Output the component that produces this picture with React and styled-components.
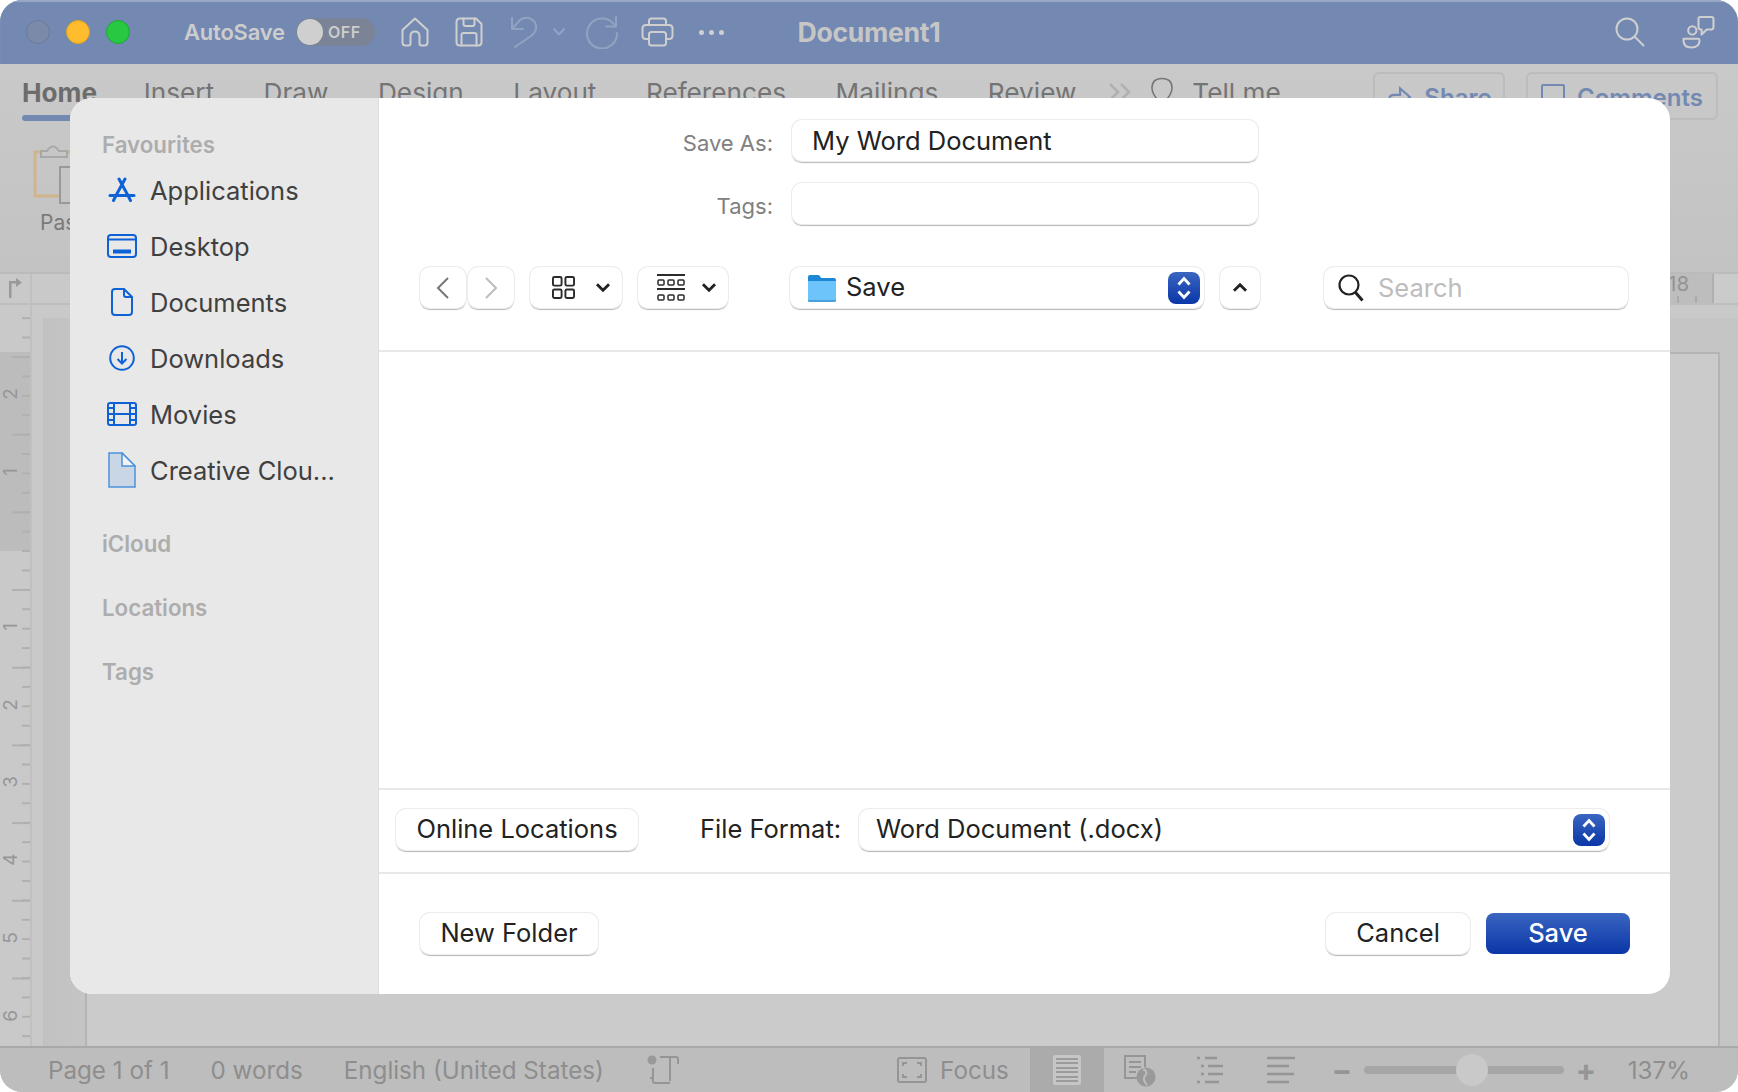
import styled, { createGlobalStyle } from 'styled-components';

const GlobalStyle = createGlobalStyle`
  html, body {
    margin: 0;
    padding: 0;
    background: #fff;
  }
  * {
    box-sizing: border-box;
  }
  body {
    font-family: Inter, "Liberation Sans", sans-serif;
  }
`;

const BLUE = '#0f62d6';
const DIM = '#cdcdcd';

export default function App() {
  return (
    <Screen>
      <GlobalStyle />
      <WordWindow>
        <TitleBar>
          <TitleLeft>
            <Lights>
              <Light $color="#7b8aa9" $edge="#6a7a9a" />
              <Light $color="#febc2e" $edge="#e0a020" />
              <Light $color="#28c840" $edge="#1fa834" />
            </Lights>
            <AutoSave>AutoSave</AutoSave>
            <Toggle>
              <ToggleKnob />
              <ToggleText>OFF</ToggleText>
            </Toggle>
            <ToolIcon $w={28} $ml={26} viewBox="0 0 28 30">
              <path d="M1.500 13 L14 1.500 L26.500 13 V25.500 Q26.500 28.500 23.500 28.500 H20.500 Q18.500 28.500 18.500 26.500 V19 Q18.500 14.500 14 14.500 Q9.500 14.500 9.500 19 V26.500 Q9.500 28.500 7.500 28.500 H4.500 Q1.500 28.500 1.500 25.500 Z" />
            </ToolIcon>
            <ToolIcon $w={28} $ml={26} viewBox="0 0 28 30">
              <path d="M5 1.500 H21 L26.500 7 V25 Q26.500 28.500 23 28.500 H5 Q1.500 28.500 1.500 25 V5 Q1.500 1.500 5 1.500 Z" />
              <path d="M8.500 1.500 V7 Q8.500 9 10.500 9 H17.500 Q19.500 9 19.500 7 V1.500" />
              <path d="M6.500 28.500 V18 Q6.500 16 8.500 16 H19.500 Q21.500 16 21.500 18 V28.500" />
            </ToolIcon>
            <ToolIcon $w={30} $ml={26} $faint viewBox="0 0 30 32">
              <path d="M3 13 L3 2 M3 13 L14 13" />
              <path d="M3 13 L11 4 Q15 1 20 2 Q28 5 27 13 Q26 17 22 20 L6 31" />
            </ToolIcon>
            <ToolIcon $w={12} $ml={14} $faint viewBox="0 0 12 8">
              <path d="M1 1 L6 6.500 L11 1" />
            </ToolIcon>
            <ToolIcon $w={33} $ml={21} $faint viewBox="0 0 33 33">
              <path d="M29 10 A15 15 0 1 0 31 17" />
              <path d="M30 1 V10.500 H20" />
            </ToolIcon>
            <ToolIcon $w={33} $ml={22} viewBox="0 0 33 30">
              <path d="M8 8 V4 Q8 1.500 10.500 1.500 H22.500 Q25 1.500 25 4 V8" />
              <path d="M8 22 H5 Q1.500 22 1.500 18.500 V11.500 Q1.500 8 5 8 H28 Q31.500 8 31.500 11.500 V18.500 Q31.500 22 28 22 H25" />
              <rect x="8" y="15" width="17" height="13.500" rx="2.500" />
            </ToolIcon>
            <Dots $ml={25}>
              <i />
              <i />
              <i />
            </Dots>
          </TitleLeft>
          <DocTitle>Document1</DocTitle>
          <TitleRight>
            <ToolIcon $w={30} $ml={0} viewBox="0 0 30 30">
              <circle cx="12" cy="12" r="10.500" />
              <path d="M19.500 19.500 L28.500 28.500" />
            </ToolIcon>
            <ToolIcon $w={33} $ml={37} viewBox="0 0 32 32">
              <circle cx="10" cy="14" r="4" />
              <path d="M1.500 22 H16 Q17 22 17 23.500 Q17 30.500 9 30.500 Q1.500 30.500 1.500 24 Z" />
              <path d="M16 2.500 Q16 1 18 1 H28.500 Q30.500 1 30.500 3 V11 Q30.500 13 28.500 13 H24 L19 18 V13 H18 Q16 13 16 11 Z" />
            </ToolIcon>
          </TitleRight>
        </TitleBar>

        <Ribbon>
          <TabRow>
            <Tab $active>Home</Tab>
            <Tab $ml={-3}>Insert</Tab>
            <Tab>Draw</Tab>
            <Tab>Design</Tab>
            <Tab>Layout</Tab>
            <Tab>References</Tab>
            <Tab>Mailings</Tab>
            <Tab>Review</Tab>
            <MoreIcon viewBox="0 0 24 20">
              <path d="M2 2 L10 10 L2 18 M13 2 L21 10 L13 18" />
            </MoreIcon>
            <BulbIcon viewBox="0 0 24 30">
              <path d="M7 22 Q2 16 2 11 Q2 1.500 12 1.500 Q22 1.500 22 11 Q22 16 17 22 L15 29 H9 Z" />
            </BulbIcon>
            <Tab $ml={-31.5}>Tell me</Tab>
            <RibbonActions>
              <ActionBox $w={132}>
                <ShareIcon viewBox="0 0 24 24">
                  <path d="M3 22 V14 Q3 10 8 10 H13 V4 L22 12 L13 20 V15 H9" />
                </ShareIcon>
                Share
              </ActionBox>
              <ActionBox $w={192}>
                <CommentIcon />
                Comments
              </ActionBox>
            </RibbonActions>
          </TabRow>
          <PasteBlock>
            <svg width="52" height="62" viewBox="0 0 52 62" fill="none">
              <path d="M8 10 H2 V54 H26 M34 10 H38" stroke="#d0b48c" strokeWidth="3" />
              <path d="M8 15 V9 H14 Q20 0 26 9 H34 V15 Z" stroke="#a8a8a8" strokeWidth="2" />
              <rect x="27" y="25" width="24" height="36" stroke="#999" strokeWidth="2" />
            </svg>
            <PasteLabel>Paste</PasteLabel>
          </PasteBlock>
        </Ribbon>

        <HRulerRow>
          <RulerCorner>
            <svg width="14" height="20" viewBox="0 0 14 20" fill="#999">
              <path d="M0 20 V3 H7 V0 L13 4.500 L7 9 V5.500 H2.500 V20 Z" />
            </svg>
          </RulerCorner>
          <HRulerEnd>18</HRulerEnd>
        </HRulerRow>

        <DocArea>
          <VRuler>
            {['2', '1', '', '1', '2', '3', '4', '5', '6'].map((n, i) => (
              <RulerCell key={i}>{n}</RulerCell>
            ))}
          </VRuler>
          <Workspace>
            <Shade>
              <Page />
            </Shade>
          </Workspace>
        </DocArea>

        <StatusBar>
          <StatusText>Page 1 of 1</StatusText>
          <StatusText $ml={41}>0 words</StatusText>
          <StatusText $ml={41}>English (United States)</StatusText>
          <StatusIcon $w={34} $ml={42} viewBox="0 0 34 32">
            <circle cx="6" cy="6" r="4.500" fill="#999" stroke="none" />
            <path d="M14 3 H30 Q32 3 32 5 V10 M24 3 V27 M7 14 V27 Q7 29 9 29 H24" />
            <path d="M4 24 H7" />
          </StatusIcon>
          <StatusRight>
            <StatusIcon $w={30} $ml={0} viewBox="0 0 30 26">
              <rect x="1" y="1" width="28" height="24" rx="2" />
              <path d="M6 9 V6 H10 M20 6 H24 V9 M6 17 V20 H10 M24 17 V20 H20" />
            </StatusIcon>
            <StatusText $ml={13}>Focus</StatusText>
            <ViewCell $active $ml={21}>
              <ViewPage>
                <i />
                <i />
                <i />
                <i />
                <i />
                <i />
              </ViewPage>
            </ViewCell>
            <ViewCell>
              <StatusIcon $w={33} viewBox="0 0 33 33">
                <path d="M16 24 H2 V2 H22 V13 M6 8 H18 M6 13 H18 M6 18 H13" />
                <circle cx="23" cy="23" r="9.500" fill="#999" stroke="none" />
                <path d="M20 15 Q26 18 22 22 Q19 25 24 31" stroke="#bdbdbd" />
              </StatusIcon>
            </ViewCell>
            <ViewCell>
              <StatusIcon $w={30} viewBox="0 0 30 30">
                <path d="M2 3 H5 M10 3 H22 M6 11 H9 M13 11 H28 M6 19 H9 M13 19 H28 M2 27 H5 M10 27 H24" strokeWidth="2.500" />
              </StatusIcon>
            </ViewCell>
            <ViewCell>
              <StatusIcon $w={30} viewBox="0 0 30 30">
                <path d="M1 3 H29 M1 11 H23 M1 19 H28 M1 27 H23" strokeWidth="2.500" />
              </StatusIcon>
            </ViewCell>
            <ZoomSign $ml={15}>−</ZoomSign>
            <ZoomTrack>
              <ZoomThumb />
            </ZoomTrack>
            <ZoomSign $ml={12}>+</ZoomSign>
            <StatusText $ml={35}>137%</StatusText>
          </StatusRight>
        </StatusBar>

        <Dialog>
          <Sidebar>
            <SideHead>Favourites</SideHead>
            <SideList>
              <SideItem>
                <IconSlot>
                  <svg width="28" height="26" viewBox="0 0 28 26" fill="none" stroke={BLUE} strokeWidth="3" strokeLinecap="round">
                    <path d="M11 2 L20 18.500 L22.500 23.500" />
                    <path d="M17 2 L8 18.500 L5.500 23.500" />
                    <path d="M2 18.500 H26" />
                  </svg>
                </IconSlot>
                Applications
              </SideItem>
              <SideItem>
                <IconSlot>
                  <svg width="30" height="24" viewBox="0 0 30 24" fill="none" stroke={BLUE} strokeWidth="2">
                    <rect x="1" y="1" width="28" height="22" rx="3" />
                    <path d="M1 5.500 H29" />
                    <path d="M6 17.500 H24" strokeWidth="4" />
                  </svg>
                </IconSlot>
                Desktop
              </SideItem>
              <SideItem>
                <IconSlot>
                  <svg width="22" height="28" viewBox="0 0 22 28" fill="none" stroke={BLUE} strokeWidth="2">
                    <path d="M4 1 H13 L21 9 V24 Q21 27 18 27 H4 Q1 27 1 24 V4 Q1 1 4 1 Z" />
                    <path d="M13 1 V7 Q13 9 15 9 H21" />
                  </svg>
                </IconSlot>
                Documents
              </SideItem>
              <SideItem>
                <IconSlot>
                  <svg width="26" height="26" viewBox="0 0 26 26" fill="none" stroke={BLUE} strokeWidth="2">
                    <circle cx="13" cy="13" r="11.800" />
                    <path d="M13 7 V18.500 M8.500 14 L13 18.500 L17.500 14" />
                  </svg>
                </IconSlot>
                Downloads
              </SideItem>
              <SideItem>
                <IconSlot>
                  <svg width="30" height="24" viewBox="0 0 30 24" fill="none" stroke={BLUE} strokeWidth="2">
                    <rect x="1" y="1" width="28" height="22" rx="2" />
                    <path d="M7 1 V23 M23 1 V23 M7 12 H23 M1 6 H7 M1 12 H7 M1 18 H7 M23 6 H29 M23 12 H29 M23 18 H29" />
                  </svg>
                </IconSlot>
                Movies
              </SideItem>
              <SideItem>
                <IconSlot>
                  <svg width="28" height="36" viewBox="0 0 28 36">
                    <path d="M1 1 H14 L27 14 V35 H1 Z" fill="#c9d6e6" stroke="#4c93dc" strokeWidth="1.500" />
                    <path d="M14 1 V14 H27 Z" fill="#f2f2f2" stroke="#4c93dc" strokeWidth="1.500" />
                  </svg>
                </IconSlot>
                Creative Clou...
              </SideItem>
            </SideList>
            <SideHead $mt={34}>iCloud</SideHead>
            <SideHead $mt={40}>Locations</SideHead>
            <SideHead $mt={40}>Tags</SideHead>
          </Sidebar>

          <Main>
            <Header>
              <FormRow>
                <FormLabel>Save As:</FormLabel>
                <Field $w={466}>My Word Document</Field>
              </FormRow>
              <FormRow>
                <FormLabel>Tags:</FormLabel>
                <Field $w={466} />
              </FormRow>
              <Toolbar>
                <NavGroup>
                  <Control $w={46} $center>
                    <svg width="14" height="22" viewBox="0 0 14 22" fill="none" stroke="#777" strokeWidth="2">
                      <path d="M12 1 L2 11 L12 21" />
                    </svg>
                  </Control>
                  <Control $w={46} $center>
                    <svg width="14" height="22" viewBox="0 0 14 22" fill="none" stroke="#bbb" strokeWidth="2">
                      <path d="M2 1 L12 11 L2 21" />
                    </svg>
                  </Control>
                </NavGroup>
                <Control $w={92} $ml={16} $pl={22} $gap={20}>
                  <svg width="23" height="23" viewBox="0 0 24 24" fill="none" stroke="#2b2b2b" strokeWidth="2">
                    <rect x="1" y="1" width="9" height="9" rx="1.500" />
                    <rect x="14" y="1" width="9" height="9" rx="1.500" />
                    <rect x="1" y="14" width="9" height="9" rx="1.500" />
                    <rect x="14" y="14" width="9" height="9" rx="1.500" />
                  </svg>
                  <ChevronDown />
                </Control>
                <Control $w={90} $ml={16} $pl={19} $gap={16}>
                  <svg width="28" height="28" viewBox="0 0 28 28" fill="none" stroke="#2b2b2b">
                    <path d="M0 1 H28 M0 15 H28" strokeWidth="2" />
                    <rect x="1" y="6" width="6" height="5" rx="1" strokeWidth="1.500" />
                    <rect x="11" y="6" width="6" height="5" rx="1" strokeWidth="1.500" />
                    <rect x="21" y="6" width="6" height="5" rx="1" strokeWidth="1.500" />
                    <rect x="1" y="21" width="6" height="5" rx="1" strokeWidth="1.500" />
                    <rect x="11" y="21" width="6" height="5" rx="1" strokeWidth="1.500" />
                    <rect x="21" y="21" width="6" height="5" rx="1" strokeWidth="1.500" />
                  </svg>
                  <ChevronDown />
                </Control>
                <PathSelect>
                  <svg width="30" height="30" viewBox="0 0 30 30">
                    <path d="M1 4 Q1 2 3 2 H11 Q12.500 2 13.500 4 L14 5 H27 Q29 5 29 7 V10 H1 Z" fill="#1d86d6" />
                    <path d="M1 8 H29 V27 Q29 29 27 29 H3 Q1 29 1 27 Z" fill="#6cc4fa" />
                    <path d="M1 27 H29 V27.500 Q29 29 27 29 H3 Q1 29 1 27.500 Z" fill="#4a9fd8" />
                  </svg>
                  <PathName>Save</PathName>
                  <Stepper />
                </PathSelect>
                <Control $w={40} $ml={16} $center>
                  <svg width="16" height="11" viewBox="0 0 14 10" fill="none" stroke="#222" strokeWidth="2.600">
                    <path d="M1.500 8 L7 2.500 L12.500 8" />
                  </svg>
                </Control>
                <SearchBox>
                  <svg width="26" height="28" viewBox="0 0 26 28" fill="none" stroke="#222" strokeWidth="2.200">
                    <circle cx="11" cy="11" r="9.500" />
                    <path d="M17.500 18.500 L24.500 26.500" strokeWidth="3" />
                  </svg>
                  <SearchHint>Search</SearchHint>
                </SearchBox>
              </Toolbar>
            </Header>
            <FileList />
            <FormatBar>
              <Control $w={242} $center>
                <ControlText>Online Locations</ControlText>
              </Control>
              <FormatLabel>File Format:</FormatLabel>
              <FormatSelect>
                <ControlText>Word Document (.docx)</ControlText>
                <Stepper />
              </FormatSelect>
            </FormatBar>
            <Footer>
              <Control $w={178} $center>
                <ControlText>New Folder</ControlText>
              </Control>
              <FooterRight>
                <Control $w={144} $center>
                  <ControlText>Cancel</ControlText>
                </Control>
                <PrimaryButton>Save</PrimaryButton>
              </FooterRight>
            </Footer>
          </Main>
        </Dialog>
      </WordWindow>
    </Screen>
  );
}

function ChevronDown() {
  return (
    <svg width="16" height="11" viewBox="0 0 14 10" fill="none" stroke="#222" strokeWidth="2.600">
      <path d="M1.500 2 L7 7.500 L12.500 2" />
    </svg>
  );
}

function Stepper() {
  return (
    <StepperBox>
      <svg width="16" height="26" viewBox="0 0 16 26" fill="none" stroke="#fff" strokeWidth="2.800">
        <path d="M2.500 9.500 L8 3.500 L13.500 9.500" />
        <path d="M2.500 16.500 L8 22.500 L13.500 16.500" />
      </svg>
    </StepperBox>
  );
}

const Screen = styled.div`
  width: 1738px;
  height: 1092px;
  overflow: hidden;
`;

const WordWindow = styled.div`
  position: relative;
  width: 100%;
  height: 100%;
  display: flex;
  flex-direction: column;
  border-radius: 22px;
  overflow: hidden;
  background: #c8c8c8;
`;

const TitleBar = styled.header`
  flex: 0 0 64px;
  display: grid;
  grid-template-columns: 1fr auto 1fr;
  align-items: center;
  background: #7389b2;
  box-shadow: inset 0 2px 1px #9aa9c6;
  padding: 0 26px;
`;

const TitleLeft = styled.div`
  display: flex;
  align-items: center;
`;

const TitleRight = styled.div`
  display: flex;
  align-items: center;
  justify-content: flex-end;
  margin-right: -3px;
`;

const Lights = styled.div`
  display: flex;
  gap: 16px;
`;

const Light = styled.span`
  width: 24px;
  height: 24px;
  border-radius: 50%;
  background: ${(p) => p.$color};
  border: 1px solid ${(p) => p.$edge};
`;

const AutoSave = styled.span`
  margin-left: 54px;
  font-size: 22px;
  font-weight: 600;
  letter-spacing: -0.2px;
  color: ${DIM};
`;

const Toggle = styled.div`
  margin-left: 11px;
  width: 79px;
  height: 28px;
  border-radius: 14px;
  background: #7b8496;
  display: flex;
  align-items: center;
  padding-left: 1px;
`;

const ToggleKnob = styled.span`
  width: 26px;
  height: 26px;
  border-radius: 50%;
  background: #cfcfcf;
`;

const ToggleText = styled.span`
  margin-left: 5px;
  font-size: 16px;
  font-weight: 600;
  letter-spacing: 0.6px;
  color: ${DIM};
`;

const ToolIcon = styled.svg`
  flex: none;
  width: ${(p) => p.$w}px;
  margin-left: ${(p) => p.$ml}px;
  fill: none;
  stroke: ${(p) => (p.$faint ? '#92a3c2' : '#cfcfcf')};
  stroke-width: 2;
  stroke-linecap: round;
  stroke-linejoin: round;
`;

const Dots = styled.div`
  display: flex;
  gap: 5px;
  margin-left: ${(p) => p.$ml}px;

  i {
    width: 5px;
    height: 5px;
    border-radius: 50%;
    background: #cfcfcf;
  }
`;

const DocTitle = styled.div`
  font-size: 26.600px;
  font-weight: 700;
  letter-spacing: -0.3px;
  color: #c6c6c6;
`;

const Ribbon = styled.section`
  flex: 0 0 208px;
  background: linear-gradient(#c9c9c9, #c3c3c3);
`;

const TabRow = styled.nav`
  height: 56px;
  display: flex;
  align-items: center;
  padding-left: 22px;
  gap: 49.500px;
`;

const Tab = styled.span`
  position: relative;
  margin-left: ${(p) => p.$ml || 0}px;
  font-size: 26.200px;
  font-weight: ${(p) => (p.$active ? 700 : 400)};
  color: ${(p) => (p.$active ? '#6c6c6c' : '#747474')};

  ${(p) =>
    p.$active &&
    `
    &::after {
      content: '';
      position: absolute;
      left: 0;
      right: 0;
      top: 38px;
      height: 6px;
      border-radius: 3px;
      background: #7389b2;
    }
  `}
`;

const MoreIcon = styled.svg`
  flex: none;
  width: 24px;
  margin-left: -17.500px;
  fill: none;
  stroke: #b0b0b0;
  stroke-width: 2.500;
`;

const BulbIcon = styled.svg`
  flex: none;
  width: 24px;
  margin-left: -31.500px;
  fill: none;
  stroke: #757575;
  stroke-width: 1.500;
`;

const RibbonActions = styled.div`
  margin-left: auto;
  padding: 16px 20px 0 0;
  display: flex;
  gap: 21px;
  align-self: flex-start;
  margin-top: -8px;
  height: 64px;
`;

const ActionBox = styled.div`
  width: ${(p) => p.$w}px;
  height: 48px;
  padding-top: 2px;
  border: 2px solid #bcbcbc;
  border-radius: 6px;
  display: flex;
  align-items: center;
  justify-content: center;
  gap: 12px;
  font-size: 24px;
  font-weight: 600;
  color: #7389b2;
`;

const ShareIcon = styled.svg`
  width: 26px;
  fill: none;
  stroke: #7389b2;
  stroke-width: 2;
`;

const CommentIcon = styled.span`
  width: 24px;
  height: 26px;
  border: 2px solid #7389b2;
  border-radius: 2px;
`;

const PasteBlock = styled.div`
  width: 110px;
  padding: 22px 0 0 33px;
  display: flex;
  flex-direction: column;
`;

const PasteLabel = styled.span`
  margin: 6px 0 0 7px;
  font-size: 21px;
  color: #7a7a7a;
`;

const HRulerRow = styled.div`
  flex: 0 0 33px;
  display: flex;
  justify-content: space-between;
  border-top: 2px solid #bbb;
  border-bottom: 2px solid #bebebe;
  background: #c9c9c9;
`;

const RulerCorner = styled.div`
  width: 32px;
  padding: 4px 0 0 9px;
  border-right: 2px solid #c0c0c0;
`;

const HRulerEnd = styled.div`
  width: 90px;
  padding-left: 20px;
  font-size: 20.600px;
  line-height: 20px;
  color: #949494;
  background-image: linear-gradient(#aaa, #aaa), linear-gradient(#aaa, #aaa),
    linear-gradient(to right, #bdbdbd 64px, #b0b0b0 64px, #b0b0b0 66px, #cbcbcb 66px);
  background-repeat: no-repeat;
  background-size: 2px 7px, 2px 7px, 100% 100%;
  background-position: 29px 100%, 47px 100%, 0 0;
`;

const DocArea = styled.div`
  flex: 1;
  min-height: 0;
  display: flex;
`;

const VRuler = styled.div`
  flex: 0 0 32px;
  padding-top: 50px;
  border-right: 2px solid #c0c0c0;
  overflow: hidden;
  background-image: linear-gradient(#b0b0b0 2px, transparent 2px), linear-gradient(#b0b0b0 2px, transparent 2px),
    linear-gradient(#c9c9c9 47px, #bcbcbc 47px, #bcbcbc 246px, #c9c9c9 246px);
  background-repeat: repeat-y, repeat-y, no-repeat;
  background-size: 18px 77.700px, 8px 19.420px, 100% 100%;
  background-position: right 0 top 51px, right 0 top 51px, 0 0;
  background-clip: padding-box;
`;

const RulerCell = styled.div`
  height: 77.700px;
  width: 20px;
  display: flex;
  align-items: center;
  justify-content: center;
  font-size: 19px;
  color: #979797;
  writing-mode: vertical-rl;
  transform: rotate(180deg);
  transform-origin: 50% 50%;
`;

const Workspace = styled.main`
  flex: 1;
  padding: 13px 0 0 11px;
  background: #c9c9c9;
`;

const Shade = styled.div`
  height: 100%;
  padding: 34px 18px 0 42px;
  background: linear-gradient(to right, #c1c1c1, #c5c5c5 44px);
`;

const Page = styled.div`
  height: 100%;
  background: #cbcbcb;
  border-top: 2px solid #b4b4b4;
  border-left: 2px solid #b4b4b4;
  border-right: 2px solid #b4b4b4;
`;

const StatusBar = styled.footer`
  flex: 0 0 46px;
  display: flex;
  align-items: center;
  padding-left: 48px;
  border-top: 2px solid #a9a9a9;
  background: #bdbdbd;
`;

const StatusText = styled.span`
  margin-left: ${(p) => p.$ml || 0}px;
  font-size: 24.200px;
  color: #8e8e8e;
  white-space: nowrap;
`;

const StatusRight = styled.div`
  margin-left: auto;
  height: 100%;
  display: flex;
  align-items: center;
  padding-right: 48px;
`;

const StatusIcon = styled.svg`
  flex: none;
  width: ${(p) => p.$w}px;
  margin-left: ${(p) => p.$ml || 0}px;
  fill: none;
  stroke: #959595;
  stroke-width: 2;
`;

const ViewCell = styled.div`
  width: ${(p) => (p.$active ? 74 : 71)}px;
  height: 100%;
  margin-left: ${(p) => p.$ml || 0}px;
  display: flex;
  align-items: center;
  justify-content: center;
  background: ${(p) => (p.$active ? '#ababab' : 'transparent')};
`;

const ViewPage = styled.div`
  width: 28px;
  height: 30px;
  padding: 3px 3px;
  background: #c6c6c6;
  border-radius: 2px;
  display: flex;
  flex-direction: column;
  justify-content: space-between;

  i {
    height: 2px;
    background: #9b9b9b;
  }
`;

const ZoomSign = styled.span`
  margin-left: ${(p) => p.$ml}px;
  width: 17px;
  text-align: center;
  font-size: 30px;
  font-weight: 700;
  line-height: 1;
  color: #959595;
`;

const ZoomTrack = styled.div`
  position: relative;
  margin-left: 15px;
  width: 200px;
  height: 8px;
  border-radius: 4px;
  background: #a6a6a6;
`;

const ZoomThumb = styled.span`
  position: absolute;
  left: 92px;
  top: -12px;
  width: 32px;
  height: 32px;
  border-radius: 50%;
  background: #c9c9c9;
`;

const Dialog = styled.div`
  position: absolute;
  left: 70px;
  top: 98px;
  width: 1600px;
  height: 896px;
  display: flex;
  border-radius: 22px;
  overflow: hidden;
  background: #fff;
`;

const Sidebar = styled.aside`
  flex: 0 0 309px;
  padding: 35px 0 0 32px;
  background: #e8e8e8;
  border-right: 1px solid #dedede;
`;

const SideHead = styled.div`
  margin-top: ${(p) => p.$mt || 0}px;
  height: 24px;
  line-height: 24px;
  font-size: 22.300px;
  font-weight: 600;
  color: #adadad;
`;

const SideList = styled.div`
  margin-top: 5px;
  display: flex;
  flex-direction: column;
`;

const SideItem = styled.div`
  height: 56px;
  display: flex;
  align-items: center;
  padding-left: 4px;
  gap: 12px;
  font-size: 25.500px;
  color: #404040;
  white-space: nowrap;
`;

const IconSlot = styled.span`
  flex: 0 0 32px;
  display: flex;
  align-items: center;
  justify-content: center;
`;

const Main = styled.div`
  flex: 1;
  min-width: 0;
  display: flex;
  flex-direction: column;
`;

const Header = styled.div`
  padding: 22px 0 42px;
  display: flex;
  flex-direction: column;
  border-bottom: 2px solid #e8e8e8;
`;

const FormRow = styled.div`
  display: flex;
  align-items: center;
  gap: 19px;
  margin-bottom: 22px;
`;

const FormLabel = styled.span`
  width: 394px;
  padding-top: 5px;
  text-align: right;
  font-size: 22px;
  color: #808080;
`;

const raised = `
  background: #fff;
  border-radius: 10px;
  box-shadow: 0 0 0 1px #ececec, 0 2px 1px -0.500px #b9b9b9;
`;

const Field = styled.div`
  ${raised}
  width: ${(p) => p.$w}px;
  height: 41px;
  padding-left: 20px;
  font-size: 25.500px;
  line-height: 41px;
  color: #222;
`;

const Toolbar = styled.div`
  margin-top: 21px;
  padding-left: 41px;
  display: flex;
  align-items: center;
`;

const NavGroup = styled.div`
  display: flex;
  gap: 2px;
`;

const Control = styled.div`
  ${raised}
  flex: none;
  width: ${(p) => p.$w}px;
  height: 41px;
  margin-left: ${(p) => p.$ml || 0}px;
  padding-left: ${(p) => p.$pl || 0}px;
  display: flex;
  align-items: center;
  justify-content: ${(p) => (p.$center ? 'center' : 'flex-start')};
  gap: ${(p) => p.$gap || 0}px;
`;

const ControlText = styled.span`
  margin-top: -2px;
  font-size: 25.500px;
  color: #222;
  white-space: nowrap;
`;

const PathSelect = styled.div`
  ${raised}
  flex: none;
  width: 414px;
  height: 41px;
  margin-left: 62px;
  padding: 0 4px 0 17px;
  display: flex;
  align-items: center;
`;

const PathName = styled.span`
  margin: -2px 0 0 9px;
  font-size: 25.500px;
  color: #222;
`;

const StepperBox = styled.span`
  margin-left: auto;
  width: 32px;
  height: 32px;
  border-radius: 8px;
  display: flex;
  align-items: center;
  justify-content: center;
  background: linear-gradient(#3a65c0, #0a36a8);
`;

const SearchBox = styled.div`
  ${raised}
  flex: none;
  width: 304px;
  height: 41px;
  margin-left: 64px;
  padding-left: 14px;
  display: flex;
  align-items: center;
  gap: 14px;
`;

const SearchHint = styled.span`
  font-size: 25.500px;
  color: #bdbdbd;
`;

const FileList = styled.div`
  flex: 1;
`;

const FormatBar = styled.div`
  padding: 19px 0 22px 17px;
  display: flex;
  align-items: center;
  border-top: 2px solid #e8e8e8;
  border-bottom: 2px solid #e8e8e8;
`;

const FormatLabel = styled.span`
  margin: -2px 0 0 62px;
  font-size: 25.500px;
  color: #222;
  white-space: nowrap;
`;

const FormatSelect = styled.div`
  ${raised}
  flex: none;
  width: 750px;
  height: 41px;
  margin-left: auto;
  margin-right: 61px;
  padding: 0 4px 0 17px;
  display: flex;
  align-items: center;
`;

const Footer = styled.div`
  flex: 0 0 120px;
  padding: 39px 40px 0 41px;
  display: flex;
  align-items: flex-start;
  justify-content: space-between;
`;

const FooterRight = styled.div`
  display: flex;
  gap: 16px;
`;

const PrimaryButton = styled.div`
  width: 144px;
  height: 41px;
  padding-bottom: 2px;
  border-radius: 8px;
  display: flex;
  align-items: center;
  justify-content: center;
  font-size: 25.500px;
  font-weight: 500;
  color: #fff;
  background: linear-gradient(#3a65c0, #0a36a8);
`;
